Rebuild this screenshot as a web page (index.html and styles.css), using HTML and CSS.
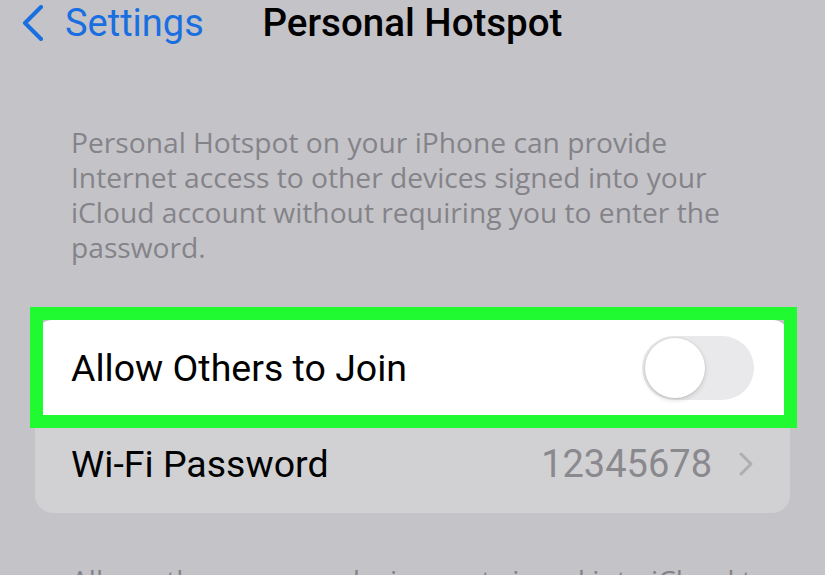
FILE: index.html
```html
<!DOCTYPE html>
<html lang="en">
<head>
<meta charset="utf-8">
<title>Personal Hotspot</title>
<link rel="stylesheet" href="styles.css">
</head>
<body>
<header class="nav">
  <a class="back" href="#">
    <svg class="chev" width="22" height="36" viewBox="0 0 22 36"><path d="M19 2 L3 18 L19 34" fill="none" stroke="#1a6fe0" stroke-width="4" stroke-linecap="round" stroke-linejoin="round"/></svg>
    <span>Settings</span>
  </a>
  <h1 class="title">Personal Hotspot</h1>
  <span></span>
</header>
<p class="note">Personal Hotspot on your iPhone can provide<br>Internet access to other devices signed into your<br>iCloud account without requiring you to enter the<br>password.</p>
<section class="card">
  <div class="row row-hl">
    <span class="label">Allow Others to Join</span>
    <span class="switch"><span class="knob"></span></span>
    <span class="mark"></span>
  </div>
  <div class="row row2">
    <span class="label">Wi-Fi Password</span>
    <span class="value">12345678</span>
    <svg class="disc" width="16" height="26" viewBox="0 0 16 26"><path d="M3 3 L13 13 L3 23" fill="none" stroke="#aeaeb2" stroke-width="3" stroke-linecap="round" stroke-linejoin="round"/></svg>
  </div>
</section>
<p class="note note2">Allow other users or devices not signed into iCloud to look for your shared network</p>
</body>
</html>
```
FILE: styles.css
```css
html, body { margin: 0; padding: 0; }
body {
  background: #c4c3c8;
  font-family: Roboto, "Liberation Sans", sans-serif;
  width: 825px;
  height: 575px;
  overflow: hidden;
}
.nav {
  display: grid;
  grid-template-columns: 1fr auto 1fr;
  align-items: center;
  height: 40px;
}
.back {
  display: flex;
  align-items: center;
  gap: 21px;
  padding-left: 22px;
  color: #1a6fe0;
  text-decoration: none;
  font-size: 38px;
}
.chev { display: block; }
.title {
  margin: 0;
  font-size: 38.5px;
  font-weight: 500;
  color: #000;
}
.note {
  margin: 85px 0 0;
  padding: 0 40px 0 71px;
  font-family: "Open Sans", sans-serif;
  font-size: 28.2px;
  line-height: 35px;
  color: #848389;
  white-space: nowrap;
}
.card {
  margin: 55px 35px 0;
  background: #d1d1d3;
  border-radius: 18px;
}
.row {
  display: flex;
  align-items: center;
  height: 95px;
  padding: 0 36px;
  position: relative;
}
.row2 { height: 98px; }
.row-hl { background: #fff; border-radius: 18px 18px 0 0; }
.label { flex: 1; font-size: 37.5px; color: #000; }
.value { font-size: 38px; color: #8a898e; margin-right: 26px; }
.switch {
  width: 112px;
  height: 64px;
  border-radius: 32px;
  background: #e9e9eb;
  display: flex;
  align-items: center;
  padding-left: 3px;
  box-sizing: border-box;
}
.knob {
  width: 60px;
  height: 60px;
  border-radius: 50%;
  background: #fff;
  box-shadow: 0 2px 5px rgba(0,0,0,0.15), 0 0 0 1px rgba(0,0,0,0.04);
}
.mark {
  position: absolute;
  top: -13px;
  bottom: -13px;
  left: -5px;
  right: -7px;
  border: 13px solid #1ffb30;
  pointer-events: none;
}
.note2 { margin-top: 50px; white-space: normal; }
```
